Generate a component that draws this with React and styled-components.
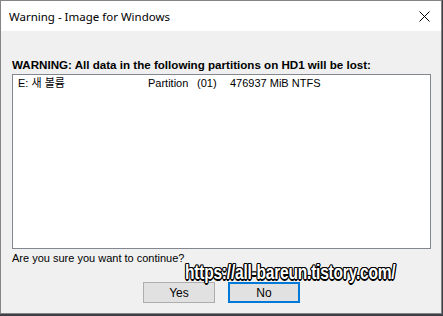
import styled, { createGlobalStyle } from 'styled-components';

const GlobalStyle = createGlobalStyle`
  html, body {
    margin: 0;
    padding: 0;
    background: #3c4046;
  }
`;

const Window = styled.div`
  position: relative;
  box-sizing: border-box;
  width: 442px;
  height: 314px;
  border: 1px solid #858585;
  background: #f0f0f0;
  display: flex;
  flex-direction: column;
  overflow: hidden;
`;

const TitleBar = styled.div`
  height: 30px;
  background: #fff;
  display: flex;
  align-items: center;
  justify-content: space-between;
  padding: 0 8px 0 8px;
  font-family: "Noto Sans", "Liberation Sans", sans-serif;
  font-size: 11.5px;
  color: #000;
`;

const CloseButton = styled.div`
  width: 14px;
  height: 14px;
  display: flex;
  align-items: center;
  justify-content: center;
  margin-right: 2px;
`;

const Content = styled.div`
  flex: 1;
  display: flex;
  flex-direction: column;
  padding: 27px 10px 0 11px;
  font-family: "Liberation Sans", Arial, sans-serif;
  font-size: 11px;
  color: #000;
`;

const Heading = styled.div`
  font-weight: bold;
  font-size: 11.6px;
  line-height: 14px;
  margin-bottom: 2px;
  white-space: nowrap;
`;

const ListBox = styled.div`
  box-sizing: border-box;
  height: 175px;
  background: #fff;
  border: 1px solid #828790;
  padding: 1px 5px;
`;

const Row = styled.div`
  display: flex;
  line-height: 14px;
  white-space: pre;
`;

const Cell = styled.span`
  width: ${(p) => p.$w}px;
  font-family: "Liberation Sans", "Noto Sans CJK KR", sans-serif;
`;

const Question = styled.div`
  margin-top: 3px;
  line-height: 13px;
`;

const ButtonRow = styled.div`
  display: flex;
  justify-content: center;
  gap: 13px;
  margin-top: 17px;
`;

const Button = styled.div`
  box-sizing: border-box;
  width: 72px;
  height: 21px;
  display: flex;
  align-items: center;
  justify-content: center;
  background: #e1e1e1;
  border: ${(p) => (p.$primary ? '2px solid #0078d7' : '1px solid #adadad')};
  font-size: 12px;
`;

const Watermark = styled.div`
  position: absolute;
  left: 184px;
  top: 259px;
  white-space: nowrap;
  transform: scaleX(0.74);
  transform-origin: left top;
  font-family: "Liberation Sans", sans-serif;
  font-weight: bold;
  font-size: 21px;
  line-height: 23px;
  color: #fff;
  letter-spacing: -0.3px;
  text-shadow:
    -1px -1px 0 #000, 1px -1px 0 #000, -1px 1px 0 #000, 1px 1px 0 #000,
    0 -1.5px 0 #000, 0 1.5px 0 #000, -1.5px 0 0 #000, 1.5px 0 0 #000;
`;

export default function App() {
  return (
    <>
      <GlobalStyle />
      <Window>
        <TitleBar>
          <span>Warning - Image for Windows</span>
          <CloseButton>
            <svg width="11" height="11" viewBox="0 0 11 11">
              <path d="M0.5 0.5 L10.5 10.5 M10.5 0.5 L0.5 10.5" stroke="#000" strokeWidth="1" />
            </svg>
          </CloseButton>
        </TitleBar>
        <Content>
          <Heading>WARNING: All data in the following partitions on HD1 will be lost:</Heading>
          <ListBox>
            <Row>
              <Cell $w={130}>E: 새 볼륨</Cell>
              <Cell $w={49}>Partition</Cell>
              <Cell $w={33}>(01)</Cell>
              <Cell $w={120}>476937 MiB NTFS</Cell>
            </Row>
          </ListBox>
          <Question>Are you sure you want to continue?</Question>
          <ButtonRow>
            <Button>Yes</Button>
            <Button $primary>No</Button>
          </ButtonRow>
        </Content>
        <Watermark>https://all-bareun.tistory.com/</Watermark>
      </Window>
    </>
  );
}
